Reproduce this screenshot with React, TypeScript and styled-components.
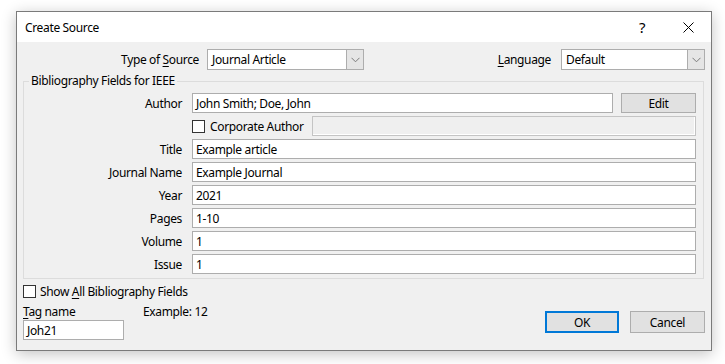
import React from 'react';
import styled, {createGlobalStyle} from 'styled-components';

const GlobalStyle = createGlobalStyle`
  html, body {
    margin: 0;
    padding: 0;
    background: #ffffff;
  }
  body {
    font-family: "Noto Sans", "Liberation Sans", sans-serif;
    font-size: 12px;
    letter-spacing: -0.35px;
    color: #000000;
  }
`;

const Page = styled.div`
  padding: 11px 0 0 16px;
  height: 364px;
  box-sizing: border-box;
`;

const Dialog = styled.div`
  width: 696px;
  height: 340px;
  box-sizing: border-box;
  border: 1px solid #7a7a7a;
  background: #f0f0f0;
  box-shadow: 0 3px 14px rgba(0, 0, 0, 0.24);
  display: flex;
  flex-direction: column;
`;

const TitleBar = styled.div`
  height: 30px;
  background: #ffffff;
  display: flex;
  align-items: center;
  padding-left: 8px;
`;

const TitleText = styled.div`
  flex: 1;
  font-size: 12px;
`;

const TitleButton = styled.div`
  width: 46px;
  height: 30px;
  display: flex;
  align-items: center;
  justify-content: center;
  font-size: 15px;
`;

const TopRow = styled.div`
  display: flex;
  align-items: center;
  margin-top: 7px;
  height: 21px;
  padding-right: 6px;
`;

const TopLabel = styled.div<{ $width: number }>`
  width: ${p => p.$width}px;
  text-align: right;
  white-space: nowrap;
`;

const Select = styled.div<{ $width: number; $gap: number }>`
  margin-left: ${p => p.$gap}px;
  width: ${p => p.$width}px;
  height: 21px;
  box-sizing: border-box;
  border: 1px solid #adadad;
  background: #ffffff;
  display: flex;
  align-items: stretch;
`;

const SelectValue = styled.div`
  flex: 1;
  padding-left: 4px;
  display: flex;
  align-items: center;
`;

const SelectArrow = styled.div`
  width: 16px;
  background: #e5e5e5;
  border-left: 1px solid #adadad;
  display: flex;
  align-items: center;
  justify-content: center;
`;

const Spacer = styled.div`
  flex: 1;
`;

const GroupBox = styled.div`
  position: relative;
  margin: 11px 7px 0 6px;
  border: 1px solid #dcdcdc;
  padding: 11px 7px 4px 0;
  display: flex;
  flex-direction: column;
  gap: 3px;
`;

const Legend = styled.div`
  position: absolute;
  top: -9px;
  left: 5px;
  padding: 0 2px;
  background: #f0f0f0;
  line-height: 16px;
`;

const FieldRow = styled.div`
  display: flex;
  align-items: center;
  height: 20px;
`;

const FieldLabel = styled.div`
  width: 158px;
  text-align: right;
  margin-right: 10px;
  white-space: nowrap;
`;

const TextBox = styled.div<{ $width?: number }>`
  ${p => (p.$width ? `width: ${p.$width}px;` : 'flex: 1;')}
  height: 20px;
  box-sizing: border-box;
  border: 1px solid #adadad;
  background: #ffffff;
  padding-left: 3px;
  display: flex;
  align-items: center;
  white-space: nowrap;
`;

const DisabledBox = styled.div`
  flex: 1;
  height: 20px;
  box-sizing: border-box;
  border: 1px solid #c4c4c4;
  background: #efefef;
  box-shadow: inset -1px -1px 0 #ffffff;
`;

const Button = styled.div<{ $primary?: boolean; $width: number; $height: number }>`
  width: ${p => p.$width}px;
  height: ${p => p.$height}px;
  box-sizing: border-box;
  background: #e1e1e1;
  border: ${p => (p.$primary ? '2px solid #0078d7' : '1px solid #adadad')};
  display: flex;
  align-items: center;
  justify-content: center;
`;

const CheckLine = styled.label<{ $width?: number }>`
  display: flex;
  align-items: center;
  gap: 5px;
  white-space: nowrap;
  ${p => (p.$width ? `width: ${p.$width}px;` : '')}
`;

const CheckBox = styled.div`
  width: 13px;
  height: 13px;
  box-sizing: border-box;
  border: 1px solid #333333;
  background: #ffffff;
`;

const Bottom = styled.div`
  padding: 0 6px;
  display: flex;
  flex-direction: column;
`;

const ShowAllRow = styled(CheckLine)`
  margin-top: 5px;
  height: 15px;
  gap: 4px;
`;

const Footer = styled.div`
  display: flex;
  margin-top: 4px;
`;

const TagColumn = styled.div`
  display: flex;
  flex-direction: column;
`;

const TagHeader = styled.div`
  display: flex;
  height: 17px;
  align-items: center;
`;

const TagLabel = styled.div`
  width: 120px;
`;

const Buttons = styled.div`
  margin-left: auto;
  margin-top: 8px;
  display: flex;
  gap: 11px;
`;

const U = styled.span`
  text-decoration: underline;
  text-underline-offset: 2px;
`;

const Chevron = () => (
    <svg width="9" height="6" viewBox="0 0 9 6">
        <polyline points="0.5,0.8 4.5,4.8 8.5,0.8" fill="none" stroke="#7a7a7a" strokeWidth="1" />
    </svg>
);

const CloseIcon = () => (
    <svg width="11" height="11" viewBox="0 0 11 11">
        <line x1="0.5" y1="0.5" x2="10.5" y2="10.5" stroke="#000" strokeWidth="1" />
        <line x1="10.5" y1="0.5" x2="0.5" y2="10.5" stroke="#000" strokeWidth="1" />
    </svg>
);

const fields = [
    { label: 'Title', value: 'Example article' },
    { label: 'Journal Name', value: 'Example Journal' },
    { label: 'Year', value: '2021' },
    { label: 'Pages', value: '1-10' },
    { label: 'Volume', value: '1' },
    { label: 'Issue', value: '1' },
];

const App = () => {
    return (
        <Page>
            <GlobalStyle />
            <Dialog>
                <TitleBar>
                    <TitleText>Create Source</TitleText>
                    <TitleButton>?</TitleButton>
                    <TitleButton><CloseIcon /></TitleButton>
                </TitleBar>

                <TopRow>
                    <TopLabel $width={182}>Type of <U>S</U>ource</TopLabel>
                    <Select $width={157} $gap={8}>
                        <SelectValue>Journal Article</SelectValue>
                        <SelectArrow><Chevron /></SelectArrow>
                    </Select>
                    <Spacer />
                    <TopLabel $width={60}><U>L</U>anguage</TopLabel>
                    <Select $width={144} $gap={10}>
                        <SelectValue>Default</SelectValue>
                        <SelectArrow><Chevron /></SelectArrow>
                    </Select>
                </TopRow>

                <GroupBox>
                    <Legend>Bibliography Fields for IEEE</Legend>
                    <FieldRow>
                        <FieldLabel>Author</FieldLabel>
                        <TextBox $width={421}>John Smith; Doe, John</TextBox>
                        <Spacer />
                        <Button $width={75} $height={20}>Edit</Button>
                    </FieldRow>
                    <FieldRow>
                        <FieldLabel />
                        <CheckLine $width={120}>
                            <CheckBox />
                            <span>Corporate Author</span>
                        </CheckLine>
                        <DisabledBox />
                    </FieldRow>
                    {fields.map(f => (
                        <FieldRow key={f.label}>
                            <FieldLabel>{f.label}</FieldLabel>
                            <TextBox>{f.value}</TextBox>
                        </FieldRow>
                    ))}
                </GroupBox>

                <Bottom>
                    <ShowAllRow>
                        <CheckBox />
                        <span>Show <U>A</U>ll Bibliography Fields</span>
                    </ShowAllRow>
                    <Footer>
                        <TagColumn>
                            <TagHeader>
                                <TagLabel><U>T</U>ag name</TagLabel>
                                Example: 12
                            </TagHeader>
                            <TextBox $width={101}>Joh21</TextBox>
                        </TagColumn>
                        <Buttons>
                            <Button $primary $width={74} $height={22}>OK</Button>
                            <Button $width={75} $height={22}>Cancel</Button>
                        </Buttons>
                    </Footer>
                </Bottom>
            </Dialog>
        </Page>
    );
};

export default App;
